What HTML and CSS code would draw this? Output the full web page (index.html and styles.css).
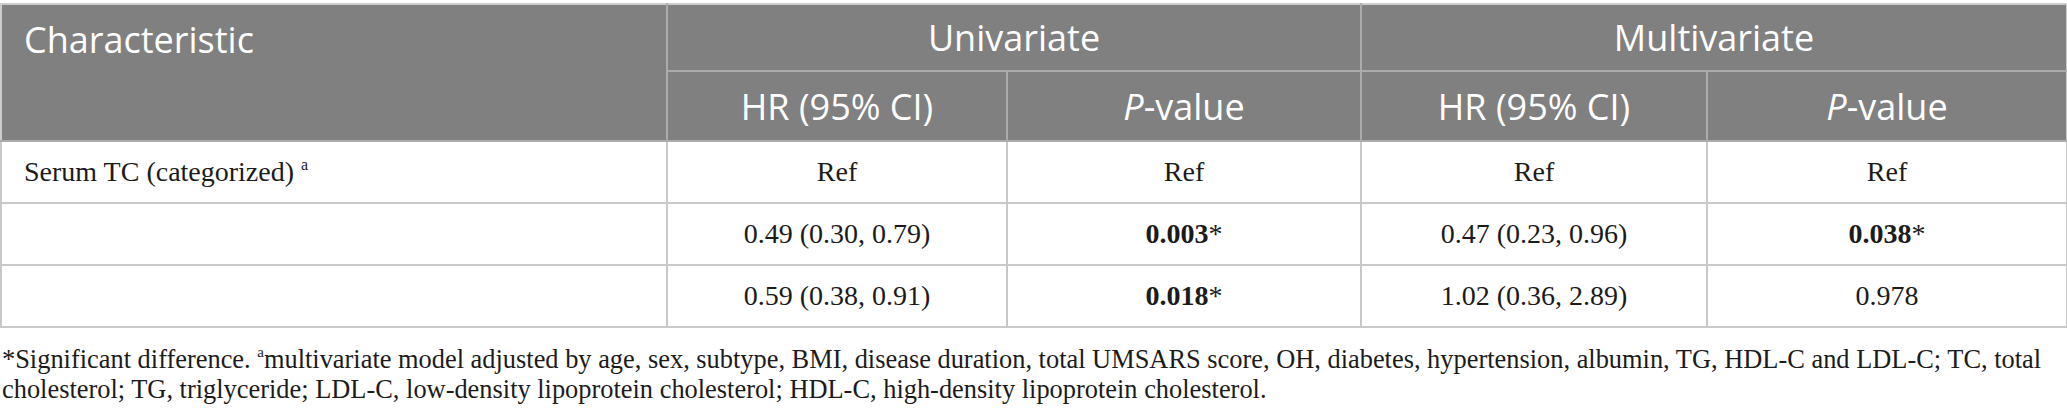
FILE: index.html
```html
<!DOCTYPE html>
<html lang="en">
<head>
<meta charset="utf-8">
<title>Table</title>
<link rel="stylesheet" href="styles.css">
</head>
<body>
<div class="wrap">
  <table class="data">
    <colgroup>
      <col class="c1">
      <col class="c2">
      <col class="c3">
      <col class="c4">
      <col class="c5">
    </colgroup>
    <thead>
      <tr class="h1">
        <th class="char" rowspan="2">Characteristic</th>
        <th colspan="2">Univariate</th>
        <th colspan="2">Multivariate</th>
      </tr>
      <tr class="h2">
        <th>HR (95% CI)</th>
        <th><i>P</i>-value</th>
        <th>HR (95% CI)</th>
        <th><i>P</i>-value</th>
      </tr>
    </thead>
    <tbody>
      <tr>
        <td class="label">Serum TC (categorized) <sup>a</sup></td>
        <td>Ref</td>
        <td>Ref</td>
        <td>Ref</td>
        <td>Ref</td>
      </tr>
      <tr>
        <td class="label"></td>
        <td>0.49 (0.30, 0.79)</td>
        <td><b>0.003</b>*</td>
        <td>0.47 (0.23, 0.96)</td>
        <td><b>0.038</b>*</td>
      </tr>
      <tr>
        <td class="label"></td>
        <td>0.59 (0.38, 0.91)</td>
        <td><b>0.018</b>*</td>
        <td>1.02 (0.36, 2.89)</td>
        <td>0.978</td>
      </tr>
    </tbody>
  </table>
  <p class="note">*Significant difference. <sup>a</sup>multivariate model adjusted by age, sex, subtype, BMI, disease duration, total UMSARS score, OH, diabetes, hypertension, albumin, TG, HDL-C and LDL-C; TC, total cholesterol; TG, triglyceride; LDL-C, low-density lipoprotein cholesterol; HDL-C, high-density lipoprotein cholesterol.</p>
</div>
</body>
</html>
```
FILE: styles.css
```css
html, body {
  margin: 0;
  padding: 0;
  background: #ffffff;
}

.wrap {
  padding-top: 3px;
  width: 2067px;
}

.data {
  width: 2066px;
  border-collapse: collapse;
  table-layout: fixed;
  font-family: "Liberation Serif", "Times New Roman", serif;
  font-size: 28px;
  color: #1b1b1b;
}

.c1 { width: 666px; }
.c2 { width: 340px; }
.c3 { width: 354px; }
.c4 { width: 346px; }
.c5 { width: 360px; }

.data th {
  background: #808080;
  color: #ffffff;
  font-family: "Open Sans", "Noto Sans", sans-serif;
  font-weight: 400;
  font-size: 36px;
  line-height: 43px;
  text-align: center;
  vertical-align: middle;
  padding: 0;
  border: 2px solid #ababab;
}

.data thead tr:first-child th {
  border-top-color: #cccccc;
}

.data .h1 { height: 67px; }
.data .h2 { height: 70px; }

.data th.char {
  text-align: left;
  vertical-align: top;
  padding: 13px 0 0 22px;
  border-left-color: #cccccc;
}

.data thead tr th:last-child {
  border-right-color: #cccccc;
}

.data th i {
  font-style: italic;
}

.data tbody tr {
  height: 62px;
}

.data td {
  padding: 0;
  text-align: center;
  vertical-align: middle;
  border: 2px solid #c9c9c9;
  line-height: 32px;
}

.data td.label {
  text-align: left;
  padding-left: 22px;
}

.data sup {
  font-size: 16px;
  line-height: 0;
  vertical-align: 11px;
}

.data b {
  font-weight: 700;
}

.note {
  margin: 16px 0 0 2px;
  font-family: "Liberation Serif", "Times New Roman", serif;
  font-size: 26.4px;
  line-height: 30px;
  color: #1b1b1b;
}

.note sup {
  font-size: 15px;
  line-height: 0;
  vertical-align: 11px;
}
```
